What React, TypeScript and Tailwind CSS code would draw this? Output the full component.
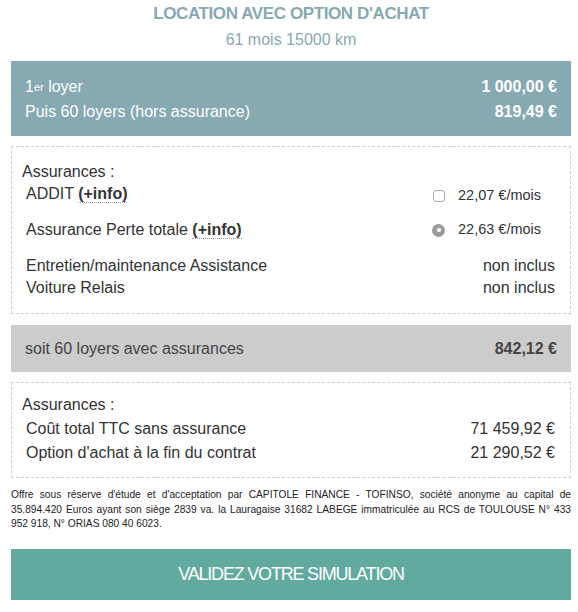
const font = { fontFamily: '"Liberation Sans", Arial, sans-serif' };

function Info() {
  return (
    <span className="font-bold border-b border-dotted border-[#999]">(+info)</span>
  );
}

export default function App() {
  return (
    <div className="w-[578px] h-[612px] bg-white pl-[11px] pr-[7px] text-[#333]" style={font}>
      {/* Header */}
      <div className="pt-[4px] text-center">
        <h1 className="text-[17px] leading-[20px] font-bold text-[#87a9b1] tracking-[-0.4px]">
          LOCATION AVEC OPTION D'ACHAT
        </h1>
        <p className="mt-[6px] text-[16px] leading-[19px] text-[#87a9b1]">61 mois 15000 km</p>
      </div>

      {/* Loyers */}
      <div className="mt-[12px] h-[75px] bg-[#87a9b1] text-white text-[16px] px-[14px] pt-[13px]">
        <div className="flex items-center justify-between h-[25px]">
          <span>
            1<sup className="text-[11px] relative -top-[1px]">er</sup> loyer
          </span>
          <span className="font-bold">1 000,00 €</span>
        </div>
        <div className="flex items-center justify-between h-[25px]">
          <span>Puis 60 loyers (hors assurance)</span>
          <span className="font-bold">819,49 €</span>
        </div>
      </div>

      {/* Assurances */}
      <div className="mt-[10px] h-[168px] border border-dashed border-[#cfcfcf] pl-[10px] pr-[15px] pt-[15px] text-[16px]">
        <div className="leading-[20px]">Assurances :</div>
        <div className="pl-[4px] flex items-center justify-between h-[24px]">
          <span>
            ADDIT <Info />
          </span>
          <span className="flex items-center w-[122px] text-[14.5px] pt-[3px]">
            <span className="w-[12px] h-[12px] border border-[#aaa] rounded-[3px] bg-white" />
            <span className="ml-[13px]">22,07 €/mois</span>
          </span>
        </div>
        <div className="pl-[4px] flex items-center justify-between h-[48px]">
          <span>
            Assurance Perte totale <Info />
          </span>
          <span className="flex items-center w-[122px] text-[14.5px]">
            <span className="-ml-[1px] w-[13px] h-[13px] rounded-full bg-[#9b9b9b] flex items-center justify-center">
              <span className="w-[4px] h-[4px] rounded-full bg-white" />
            </span>
            <span className="ml-[13px]">22,63 €/mois</span>
          </span>
        </div>
        <div className="pl-[4px] flex items-center justify-between h-[24px]">
          <span>Entretien/maintenance Assistance</span>
          <span>non inclus</span>
        </div>
        <div className="pl-[4px] flex items-center justify-between h-[20px]">
          <span>Voiture Relais</span>
          <span>non inclus</span>
        </div>
      </div>

      {/* Total */}
      <div className="mt-[11px] h-[47px] bg-[#cccccc] flex items-center justify-between px-[14px] text-[16px] text-[#444]">
        <span>soit 60 loyers avec assurances</span>
        <span className="font-bold">842,12 €</span>
      </div>

      {/* Coûts */}
      <div className="mt-[10px] h-[96px] border border-dashed border-[#cfcfcf] pl-[10px] pr-[15px] pt-[12px] text-[16px]">
        <div className="leading-[20px]">Assurances :</div>
        <div className="pl-[4px] mt-[2px]">
          <div className="h-[24px] flex items-center justify-between">
            <span>Coût total TTC sans assurance</span>
            <span>71 459,92 €</span>
          </div>
          <div className="h-[24px] flex items-center justify-between">
            <span>Option d'achat à la fin du contrat</span>
            <span>21 290,52 €</span>
          </div>
        </div>
      </div>

      {/* Mentions */}
      <p className="mt-[10px] text-[10.2px] leading-[14.5px] text-justify text-[#222]">
        Offre sous réserve d'étude et d'acceptation par CAPITOLE FINANCE - TOFINSO, société anonyme au capital de
        35.894.420 Euros ayant son siège 2839 va. la Lauragaise 31682 LABEGE immatriculée au RCS de TOULOUSE N° 433
        952 918, N° ORIAS 080 40 6023.
      </p>

      <button className="mt-[17px] w-full h-[51px] bg-[#62aa9e] text-white text-[18px] tracking-[-1.2px]">
        VALIDEZ VOTRE SIMULATION
      </button>
    </div>
  );
}
